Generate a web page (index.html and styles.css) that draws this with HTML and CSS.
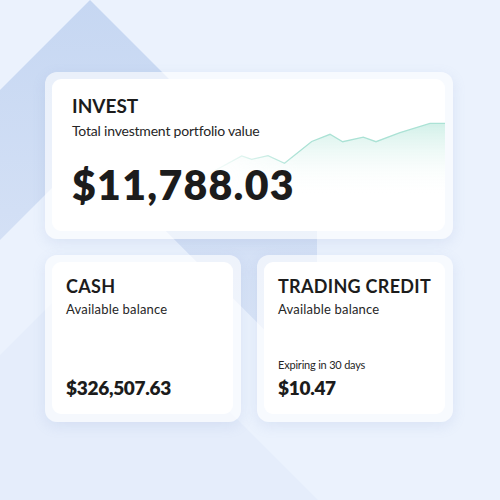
FILE: index.html
```html
<!DOCTYPE html>
<html lang="en">
<head>
<meta charset="utf-8">
<title>Accounts</title>
<link rel="stylesheet" href="styles.css">
</head>
<body>
<svg class="backdrop" viewBox="0 0 500 500" width="500" height="500" aria-hidden="true">
  <defs>
    <linearGradient id="chev" x1="0" y1="0" x2="0" y2="1" gradientUnits="objectBoundingBox">
      <stop offset="0" stop-color="#c6d7f2"/>
      <stop offset="0.55" stop-color="#d2dff5"/>
      <stop offset="1" stop-color="#dde7f8"/>
    </linearGradient>
  </defs>
  <polygon points="0,355 86.5,268.5 320,502 0,502" fill="#e5edfb"/>
  <polygon points="90,0 0,90 0,240 87.5,152.5 317,382.5 317,227" fill="url(#chev)"/>
</svg>

<main class="board">
  <section class="card">
    <div class="card-inner invest">
      <svg class="chart" viewBox="205 119 240 113" width="240" height="113" aria-hidden="true">
        <defs>
          <linearGradient id="fillg" x1="0" y1="119" x2="0" y2="195" gradientUnits="userSpaceOnUse">
            <stop offset="0" stop-color="#bfeadf" stop-opacity="0.8"/>
            <stop offset="1" stop-color="#ffffff" stop-opacity="0"/>
          </linearGradient>
          <linearGradient id="fadeg" x1="205" y1="0" x2="300" y2="0" gradientUnits="userSpaceOnUse">
            <stop offset="0" stop-color="#fff" stop-opacity="0"/>
            <stop offset="1" stop-color="#fff" stop-opacity="1"/>
          </linearGradient>
          <mask id="fade">
            <rect x="205" y="119" width="240" height="113" fill="url(#fadeg)"/>
          </mask>
        </defs>
        <g mask="url(#fade)">
          <path d="M205,176 L241.7,156 L251.7,159.3 L268,155.7 L284.5,163.3 L311.7,141.5 L330,134.3 L342.7,141.7 L363.3,137.2 L376,141.7 L400,132.7 L430,123.3 L445,123.3 L445,232 L205,232 Z" fill="url(#fillg)"/>
          <path d="M205,176 L241.7,156 L251.7,159.3 L268,155.7 L284.5,163.3 L311.7,141.5 L330,134.3 L342.7,141.7 L363.3,137.2 L376,141.7 L400,132.7 L430,123.3 L445,123.3" fill="none" stroke="#abe2d5" stroke-width="1.3"/>
        </g>
      </svg>
      <h2 class="title title-lg">INVEST</h2>
      <p class="sub sub-lg">Total investment portfolio value</p>
      <p class="big">$11,788.03</p>
    </div>
  </section>

  <div class="row">
    <section class="card">
      <div class="card-inner small">
        <div class="head">
          <h2 class="title">CASH</h2>
          <p class="sub">Available balance</p>
        </div>
        <div class="foot">
          <p class="amount">$326,507.63</p>
        </div>
      </div>
    </section>
    <section class="card">
      <div class="card-inner small">
        <div class="head">
          <h2 class="title">TRADING CREDIT</h2>
          <p class="sub">Available balance</p>
        </div>
        <div class="foot">
          <p class="note">Expiring in 30 days</p>
          <p class="amount">$10.47</p>
        </div>
      </div>
    </section>
  </div>
</main>
</body>
</html>
```

FILE: styles.css
```css
* { box-sizing: border-box; }

html, body {
  margin: 0;
  padding: 0;
}

body {
  width: 500px;
  height: 500px;
  overflow: hidden;
  position: relative;
  background: #ebf2fd;
  font-family: "Lato", "Noto Sans", sans-serif;
  color: #1c1c1c;
}

.backdrop {
  position: absolute;
  left: 0;
  top: 0;
  z-index: 0;
  display: block;
}

.board {
  position: relative;
  z-index: 1;
  width: 408px;
  margin: 72px 0 0 45px;
  display: flex;
  flex-direction: column;
  gap: 16px;
}

.row {
  display: grid;
  grid-template-columns: 196px 196px;
  gap: 16px;
}

.card {
  height: 167px;
  padding: 7px 8px 8px 7px;
  border-radius: 12px;
  background: rgba(255, 255, 255, 0.6);
  box-shadow: 0 4px 14px rgba(110, 140, 200, 0.14);
}

.card-inner {
  position: relative;
  height: 100%;
  background: #ffffff;
  border-radius: 9px;
  overflow: hidden;
}

.invest {
  padding: 15px 20px 0 20px;
}

.chart {
  position: absolute;
  left: 153px;
  top: 40px;
  display: block;
}

.title, .sub, .big, .amount, .note {
  position: relative;
  z-index: 1;
  margin: 0;
}

.title {
  font-size: 18px;
  line-height: 22px;
  font-weight: 700;
  letter-spacing: 0.3px;
  white-space: nowrap;
}

.title-lg {
  font-size: 19px;
  line-height: 24px;
  letter-spacing: 0;
}

.sub {
  margin-top: 4px;
  font-size: 13px;
  line-height: 16px;
  font-weight: 400;
  letter-spacing: 0.2px;
  color: #262626;
}

.sub-lg {
  margin-top: 4px;
  font-size: 14px;
  line-height: 17px;
  letter-spacing: -0.2px;
}

.big {
  margin-top: 22px;
  font-size: 41px;
  line-height: 48px;
  font-weight: 800;
  letter-spacing: 1.3px;
}

.small {
  padding: 13px 14px 15px 14px;
  display: flex;
  flex-direction: column;
  justify-content: space-between;
}

.note {
  font-size: 11px;
  line-height: 14px;
  letter-spacing: -0.2px;
  color: #262626;
  margin-bottom: 4px;
}

.amount {
  font-size: 19px;
  line-height: 23px;
  font-weight: 800;
  letter-spacing: -0.3px;
}
```
